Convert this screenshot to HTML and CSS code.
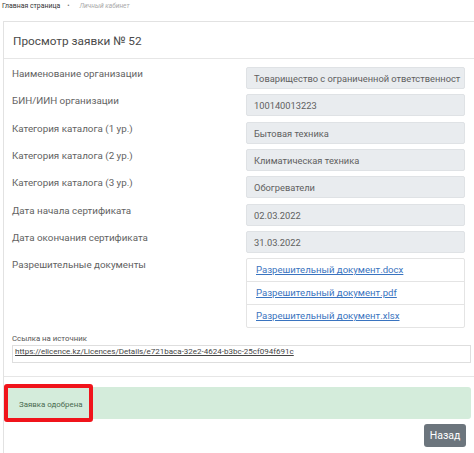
FILE: index.html
```html
<!DOCTYPE html>
<html lang="ru">
<head>
<meta charset="utf-8">
<title>Просмотр заявки</title>
<link rel="stylesheet" href="styles.css">
</head>
<body>
<div class="crumbs"><span class="crumb-home">Главная страница</span><span class="crumb-sep">•</span><span class="crumb-cur">Личный кабинет</span></div>
<div class="card">
  <div class="card-head">Просмотр заявки № 52</div>
  <div class="card-body">
    <div class="form">
      <div class="label">Наименование организации</div>
      <div class="field">Товарищество с ограниченной ответственност</div>
      <div class="label">БИН/ИИН организации</div>
      <div class="field">100140013223</div>
      <div class="label">Категория каталога (1 ур.)</div>
      <div class="field">Бытовая техника</div>
      <div class="label">Категория каталога (2 ур.)</div>
      <div class="field">Климатическая техника</div>
      <div class="label">Категория каталога (3 ур.)</div>
      <div class="field">Обогреватели</div>
      <div class="label">Дата начала сертификата</div>
      <div class="field">02.03.2022</div>
      <div class="label">Дата окончания сертификата</div>
      <div class="field">31.03.2022</div>
      <div class="label">Разрешительные документы</div>
      <ul class="docs">
        <li><a href="#">Разрешительный документ.docx</a></li>
        <li><a href="#">Разрешительный документ.pdf</a></li>
        <li><a href="#">Разрешительный документ.xlsx</a></li>
      </ul>
    </div>
    <div class="source">
      <div class="source-label">Ссылка на источник</div>
      <div class="url"><a href="#">https://elicence.kz/Licences/Details/e721baca-32e2-4624-b3bc-25cf094f691c</a></div>
    </div>
  </div>
  <div class="card-foot">
    <div class="alert"><span>Заявка одобрена</span><span class="mark"></span></div>
    <div class="actions"><button class="btn">Назад</button></div>
  </div>
</div>
</body>
</html>
```
FILE: styles.css
```css
html, body {
  margin: 0;
  padding: 0;
  background: #fff;
  font-family: Roboto, "Liberation Sans", sans-serif;
  color: #555;
}
.crumbs {
  height: 20px;
  padding-left: 2px;
  font-size: 6.9px;
  line-height: 12px;
  color: #333;
}
.crumb-sep {
  margin: 0 10px 0 7px;
  color: #777;
}
.crumb-cur {
  font-size: 6.6px;
  color: #aaa;
  font-style: italic;
}
.card {
  margin-left: 3px;
  margin-top: 1px;
  border: 1px solid #e2e2e2;
  border-right: none;
  border-bottom: none;
}
.card-head {
  height: 36px;
  padding-left: 9px;
  font-size: 11.8px;
  line-height: 38px;
  color: #4a4a4a;
  border-bottom: 1px solid #e6e6e6;
}
.card-body {
  padding: 8px 0 13px 8px;
  border-bottom: 1px solid #e6e6e6;
}
.form {
  display: grid;
  grid-template-columns: 234px 219px;
  row-gap: 5.33px;
}
.label {
  font-size: 9.8px;
  line-height: 11px;
  padding-top: 1px;
  color: #626262;
}
.field {
  height: 22px;
  box-sizing: border-box;
  padding-left: 7px;
  font-size: 9.3px;
  line-height: 21px;
  color: #606060;
  background: #e9ecef;
  border: 1px solid #dfe2e5;
  border-radius: 2px;
  white-space: nowrap;
  overflow: hidden;
}
.docs {
  list-style: none;
  margin: 0;
  padding: 0;
  border: 1px solid #e4e4e4;
  border-radius: 2px;
}
.docs li {
  height: 22px;
  padding-left: 9px;
  font-size: 9.6px;
  line-height: 21px;
  border-top: 1px solid #e4e4e4;
}
.docs li:first-child {
  border-top: none;
}
.docs a {
  color: #3a74c0;
  text-decoration: underline;
}
.source {
  margin-top: 5px;
}
.source-label {
  font-size: 7.8px;
  line-height: 11px;
  color: #555;
}
.url {
  margin-top: 1px;
  width: 459px;
  height: 18px;
  box-sizing: border-box;
  padding-left: 2px;
  border: 1px solid #dedede;
  font-size: 8px;
  line-height: 11px;
}
.url a {
  color: #444;
  text-decoration: underline;
}
.card-foot {
  padding: 10px 0 10px 1px;
}
.alert {
  position: relative;
  width: 466px;
  height: 32px;
  box-sizing: border-box;
  padding-left: 14px;
  background: #d4ecdb;
  border-radius: 3px;
  font-size: 7.9px;
  line-height: 36px;
  color: #4a6b50;
}
.mark {
  position: absolute;
  left: -1px;
  top: -3px;
  width: 89px;
  height: 38px;
  box-sizing: border-box;
  border: 4px solid #f0141b;
  border-radius: 3px;
}
.actions {
  display: flex;
  justify-content: flex-end;
  width: 461px;
  margin-top: 5px;
}
.btn {
  width: 42px;
  height: 23px;
  padding: 0;
  border: none;
  border-radius: 3px;
  background: #6c757d;
  color: #fff;
  font-family: Roboto, "Liberation Sans", sans-serif;
  font-size: 10.5px;
}
```
